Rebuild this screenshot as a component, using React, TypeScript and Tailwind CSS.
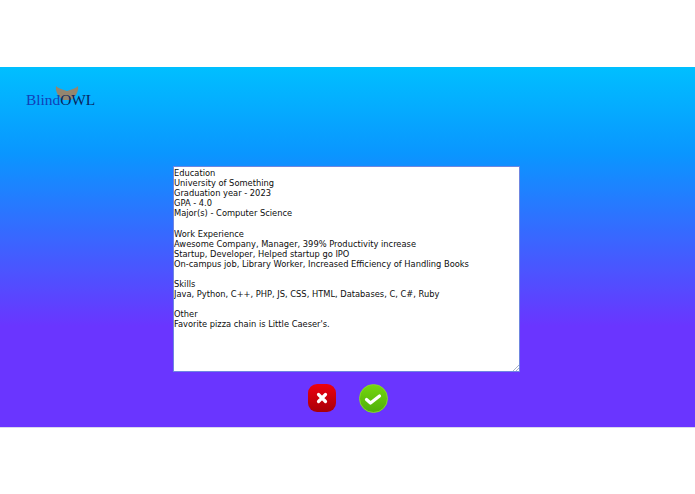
const resume = `Education
University of Something
Graduation year - 2023
GPA - 4.0
Major(s) - Computer Science

Work Experience
Awesome Company, Manager, 399% Productivity increase
Startup, Developer, Helped startup go IPO
On-campus job, Library Worker, Increased Efficiency of Handling Books

Skills
Java, Python, C++, PHP, JS, CSS, HTML, Databases, C, C#, Ruby

Other
Favorite pizza chain is Little Caeser's.`;

function Logo() {
  return (
    <div className="relative w-[70px] h-[24px] mt-[18px] ml-[26px]">
      <svg className="absolute left-[29px] top-[1px]" width="24" height="14" viewBox="0 0 24 14">
        <path d="M1 0 C4 3 7 3 9 4 L12 5 L15 4 C17 3 20 3 23 0 C24 6 20 11 16 14 L8 14 C4 11 0 6 1 0 Z" fill="#94866f" />
      </svg>
      <div className="absolute left-0 top-[5px] font-['Liberation_Serif',serif] text-[15.4px] leading-[20px] whitespace-nowrap">
        <span className="text-[#1240b8]">Blind</span>
        <span className="text-[#0a2560]">OWL</span>
      </div>
    </div>
  );
}

export default function App() {
  return (
    <div className="w-[695px] h-[494px] bg-white flex flex-col overflow-hidden">
      <div className="h-[67px]" />
      <main className="h-[361px] flex flex-col bg-[linear-gradient(180deg,#00bfff_0%,#0a96ff_24%,#6a35ff_72%,#6a35ff_100%)] border-b border-[#d8d8ee]">
        <header className="h-[99px]">
          <Logo />
        </header>
        <div className="flex justify-center">
          <div className="relative ml-[-2px]">
            <textarea
              defaultValue={resume}
              className="block w-[347px] h-[206px] bg-white border border-[#6f86e0] px-0 py-[1px] font-['DejaVu_Sans',sans-serif] text-[8.3px] leading-[10.1px] text-[#0d0d0d] outline-none resize-none"
            />
            <svg className="absolute right-[1px] bottom-[1px]" width="6" height="6" viewBox="0 0 6 6">
              <path d="M0 6 L6 0 M3 6 L6 3" stroke="#a9b4c8" strokeWidth="1" />
            </svg>
          </div>
        </div>
        <div className="flex justify-center gap-[23px] mt-[12px]">
          <button className="w-[28px] h-[28px] rounded-[9px] bg-[linear-gradient(180deg,#ee0010,#a80008)] flex items-center justify-center">
            <svg width="14" height="14" viewBox="0 0 14 14">
              <path d="M3.5 3.5 L10.5 10.5 M10.5 3.5 L3.5 10.5" stroke="#fff" strokeWidth="3.2" strokeLinecap="round" />
            </svg>
          </button>
          <button className="w-[29px] h-[29px] rounded-full border border-[#86d82e] bg-[linear-gradient(180deg,#74d60e,#50b00a)] flex items-center justify-center">
            <svg width="20" height="16" viewBox="0 0 20 16">
              <path d="M3.5 8.5 L7.5 12 L16.5 5" fill="none" stroke="#fff" strokeWidth="3.2" strokeLinecap="round" strokeLinejoin="round" />
            </svg>
          </button>
        </div>
      </main>
    </div>
  );
}
